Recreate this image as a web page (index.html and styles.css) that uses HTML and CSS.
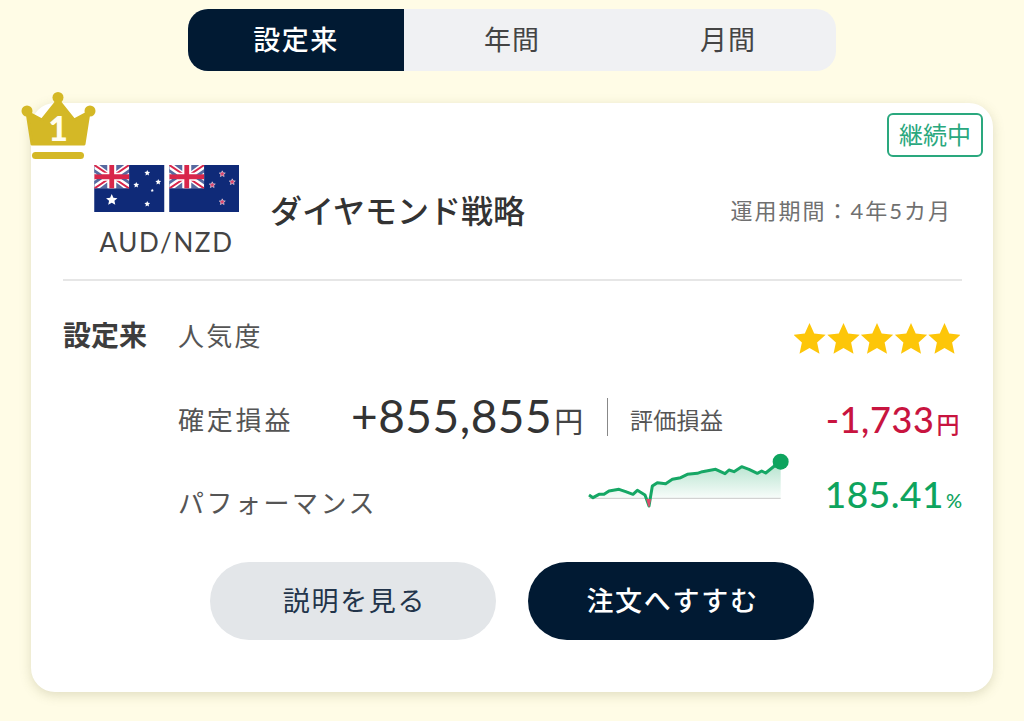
FILE: index.html
```html
<!DOCTYPE html>
<html lang="ja">
<head>
<meta charset="utf-8">
<title>ダイヤモンド戦略</title>
<link rel="stylesheet" href="styles.css">
</head>
<body>
<svg class="defs" width="0" height="0" aria-hidden="true">
  <defs>
    <symbol id="jack" viewBox="0 0 35 23.5">
      <rect width="35" height="23.5" fill="#ffffff"/>
      <path d="M0 0L35 23.5M35 0L0 23.5" stroke="#d8264a" stroke-width="2"/>
      <path d="M17.5 0V23.5M0 11.75H35" stroke="#ffffff" stroke-width="8"/>
      <path d="M17.5 0V23.5M0 11.75H35" stroke="#d8264a" stroke-width="4.8"/>
      <path d="M0 4L8 9.500H3L0 7.500ZM13 0V6L5 0ZM22 0H30L22 6ZM35 4V7.500L32 9.500H27ZM0 16L3 14H8L0 19.500ZM13 17.500V23.500H5ZM22 17.500L30 23.500H22ZM35 16V19.500L27 14H32Z" fill="#0f2a78" opacity=".7"/>
    </symbol>
    <path id="st" d="M0-1L.276-.38 .951-.309 .447.145 .588.809 0 .47-.588.809-.447.145-.951-.309-.276-.38Z"/>
    <linearGradient id="area" x1="0" y1="0" x2="0" y2="1">
      <stop offset="0" stop-color="#16a765" stop-opacity=".34"/>
      <stop offset="1" stop-color="#16a765" stop-opacity=".03"/>
    </linearGradient>
  </defs>
</svg>

<nav class="tabs">
  <div class="tab is-active">設定来</div>
  <div class="tab">年間</div>
  <div class="tab">月間</div>
</nav>

<main class="card">
  <svg class="crown" viewBox="0 0 76 70" width="76" height="70" aria-hidden="true">
    <path d="M37 8L53 28 68 20 63 52H11L6 20 21 28Z" fill="#d4b826" stroke="#d4b826" stroke-width="3" stroke-linejoin="round"/>
    <circle cx="37" cy="5.500" r="5.500" fill="#d4b826"/>
    <circle cx="6" cy="19" r="5.500" fill="#d4b826"/>
    <circle cx="69" cy="19" r="5.500" fill="#d4b826"/>
    <rect x="11" y="60" width="52" height="7" rx="3.500" fill="#d4b826"/>
    <text class="crown-num" x="37" y="49" text-anchor="middle">1</text>
  </svg>
  <div class="badge">継続中</div>

  <header class="head">
    <div class="pair">
      <div class="flags">
        <svg class="flag" viewBox="0 0 70 47" aria-hidden="true">
          <rect width="70" height="47" fill="#0f2a78"/>
          <use href="#jack" width="35" height="23.500"/>
          <g fill="#ffffff">
            <use href="#st" transform="translate(17.500 35) scale(6)"/>
            <use href="#st" transform="translate(53 8) scale(3)"/>
            <use href="#st" transform="translate(42 20) scale(3)"/>
            <use href="#st" transform="translate(64 17) scale(3)"/>
            <use href="#st" transform="translate(58 25.500) scale(1.700)"/>
            <use href="#st" transform="translate(53 39) scale(3)"/>
          </g>
        </svg>
        <svg class="flag" viewBox="0 0 70 47" aria-hidden="true">
          <rect width="70" height="47" fill="#0f2a78"/>
          <use href="#jack" width="35" height="23.500"/>
          <g fill="#d8406a" stroke="#ffffff" stroke-width=".16">
            <use href="#st" transform="translate(53 9) scale(3.200)"/>
            <use href="#st" transform="translate(43 20) scale(3.200)"/>
            <use href="#st" transform="translate(63 17) scale(3.200)"/>
            <use href="#st" transform="translate(53 37) scale(3.200)"/>
          </g>
        </svg>
      </div>
      <div class="pair-name">AUD/NZD</div>
    </div>
    <h1 class="name">ダイヤモンド戦略</h1>
    <div class="period">運用期間：4年5カ月</div>
  </header>

  <section class="stats">
    <div class="row row-pop">
      <div class="scope">設定来</div>
      <div class="label">人気度</div>
      <svg class="stars" viewBox="0 0 166 32" aria-hidden="true">
        <g fill="#fdc609">
          <use href="#st" transform="translate(15.500 17) scale(17)"/>
          <use href="#st" transform="translate(49.500 17) scale(17)"/>
          <use href="#st" transform="translate(83 17) scale(17)"/>
          <use href="#st" transform="translate(117 17) scale(17)"/>
          <use href="#st" transform="translate(150.500 17) scale(17)"/>
        </g>
      </svg>
    </div>
    <div class="row row-pl">
      <div class="scope"></div>
      <div class="label label-pl">確定損益</div>
      <div class="profit">+855,855<span class="yen">円</span></div>
      <div class="sep"></div>
      <div class="label-small">評価損益</div>
      <div class="loss">-1,733<span class="yen-small">円</span></div>
    </div>
    <div class="row row-perf">
      <div class="scope"></div>
      <div class="label label-perf">パフォーマンス</div>
      <svg class="chart" viewBox="0 0 720 240" aria-hidden="true">
        <path d="M60 172V162L72 170 90 160 105 160 120 150 150 145 170 152 192 160 205 148 228 162 240 172 250 135 265 125 290 128 310 115 335 110 355 100 385 97 400 92 440 85 468 98 480 87 495 92 518 77 540 85 565 97 578 90 590 96 635 60V172Z" fill="url(#area)"/>
        <path d="M60 172H635" stroke="#c9c9c9" stroke-width="3"/>
        <path d="M60 162L72 170 90 160 105 160 120 150 150 145 170 152 192 160 205 148 228 162 240 195 250 135 265 125 290 128 310 115 335 110 355 100 385 97 400 92 440 85 468 98 480 87 495 92 518 77 540 85 565 97 578 90 590 96 635 60" fill="none" stroke="#16a765" stroke-width="9" stroke-linejoin="round"/>
        <path d="M233 174L240 197 245 174" fill="#e04a6d" stroke="#e04a6d" stroke-width="3"/>
        <circle cx="635" cy="62" r="24" fill="#0ea45e"/>
      </svg>
      <div class="gain">185.41<span class="pct">%</span></div>
    </div>
  </section>

  <div class="actions">
    <button class="btn btn-light" type="button">説明を見る</button>
    <button class="btn btn-dark" type="button">注文へすすむ</button>
  </div>
</main>
</body>
</html>
```

FILE: styles.css
```css
* { box-sizing: border-box; }

html, body { height: 100%; }

body {
  margin: 0;
  height: 721px;
  overflow: hidden;
  background: #fffce6;
  color: #3a3a3a;
  font-family: Lato, "Noto Sans CJK JP", sans-serif;
}

.defs { position: absolute; }

.tabs {
  display: flex;
  width: 648px;
  height: 62px;
  margin: 9px auto 32px;
  border-radius: 20px;
  overflow: hidden;
  background: #f0f1f3;
}

.tab {
  flex: 0 0 216px;
  display: flex;
  align-items: center;
  justify-content: center;
  padding-bottom: 4px;
  font-size: 27px;
  letter-spacing: 1px;
  color: #444;
}

.tab.is-active {
  background: #011a33;
  color: #fff;
  font-weight: 500;
  letter-spacing: 1.500px;
}

.card {
  position: relative;
  width: 962px;
  height: 589px;
  margin-left: 31px;
  padding: 0 31px 0 32px;
  background: #fff;
  border-radius: 24px;
  box-shadow: 0 3px 12px rgba(110, 110, 60, .22);
}

.crown {
  position: absolute;
  left: -10px;
  top: -11px;
}

.crown-num {
  font-family: Lato, sans-serif;
  font-size: 34px;
  font-weight: 900;
  fill: #fffdf0;
}

.badge {
  position: absolute;
  top: 10px;
  right: 10px;
  width: 96px;
  height: 44px;
  display: flex;
  align-items: center;
  justify-content: center;
  padding-bottom: 4px;
  border: 2px solid #2aa87e;
  border-radius: 6px;
  color: #2aa87e;
  font-size: 24px;
}

.head {
  height: 178px;
  display: flex;
  border-bottom: 2px solid #e6e6e6;
  padding-top: 62px;
}

.pair {
  margin-left: 31px;
  width: 145px;
}

.flags {
  display: flex;
  gap: 4px;
  height: 47px;
}

.flag {
  width: 70.500px;
  height: 47px;
  display: block;
}

.pair-name {
  margin-top: 14px;
  text-align: center;
  font-size: 26px;
  line-height: 32px;
  letter-spacing: 1.600px;
  color: #444;
}

.name {
  margin: 23px 0 0 31px;
  font-size: 32px;
  line-height: 46px;
  font-weight: 500;
  color: #333;
  height: 46px;
}

.period {
  margin: 30px 10px 0 auto;
  font-size: 22px;
  line-height: 32px;
  letter-spacing: 2px;
  color: #707070;
}

.stats { padding-top: 31px; }

.row {
  display: flex;
  align-items: center;
}

.row-pop { height: 50px; }
.row-pl { height: 76px; margin-top: 16px; padding-top: 5px; }
.row-perf { height: 86px; }

.row-pop .scope,
.row-pop .label { padding-bottom: 6px; }

.scope {
  width: 116px;
  flex: none;
  font-size: 28px;
  font-weight: 700;
  color: #3d3d3d;
}

.label {
  margin-left: -1px;
  font-size: 26px;
  letter-spacing: 2.200px;
  color: #555;
}

.label-pl { width: 173px; flex: none; letter-spacing: 2.800px; margin-right: 1px; }

.label-perf { letter-spacing: 2.500px; margin-top: 8px; }

.stars {
  width: 166px;
  height: 32px;
  margin: 4px 2px 0 auto;
}

.profit {
  width: 256px;
  flex: none;
  margin-left: -1px;
  font-size: 46px;
  line-height: 56px;
  letter-spacing: .5px;
  color: #333;
  white-space: nowrap;
}

.yen {
  margin-left: 2px;
  font-size: 29px;
  color: #444;
}

.sep {
  width: 1px;
  height: 38px;
  margin-bottom: 4px;
  background: #888;
  flex: none;
}

.label-small {
  margin-left: 22px;
  font-size: 23px;
  letter-spacing: .3px;
  color: #555;
}

.loss {
  margin-left: auto;
  margin-right: 2px;
  font-size: 36px;
  font-weight: 500;
  letter-spacing: .6px;
  color: #c8143f;
  white-space: nowrap;
}

.yen-small {
  margin-left: 2px;
  font-size: 23px;
}

.chart {
  width: 240px;
  height: 80px;
  margin-left: 192px;
  margin-top: -32px;
  flex: none;
}

.gain {
  margin-left: auto;
  margin-top: -8px;
  font-size: 37px;
  font-weight: 500;
  letter-spacing: .5px;
  color: #0ea45e;
  white-space: nowrap;
}

.pct {
  margin-left: 2px;
  font-size: 20px;
  letter-spacing: 0;
}

.actions {
  display: flex;
  justify-content: center;
  gap: 32px;
  margin-top: 22px;
  padding-right: 1px;
}

.btn {
  width: 286px;
  height: 78px;
  padding: 0 0 3px 3px;
  border: 0;
  border-radius: 39px;
  font-family: inherit;
  font-size: 27px;
  letter-spacing: 1.700px;
}

.btn-light {
  background: #e3e6e9;
  color: #22344a;
}

.btn-dark {
  background: #011a33;
  color: #fff;
  font-weight: 500;
}
```
